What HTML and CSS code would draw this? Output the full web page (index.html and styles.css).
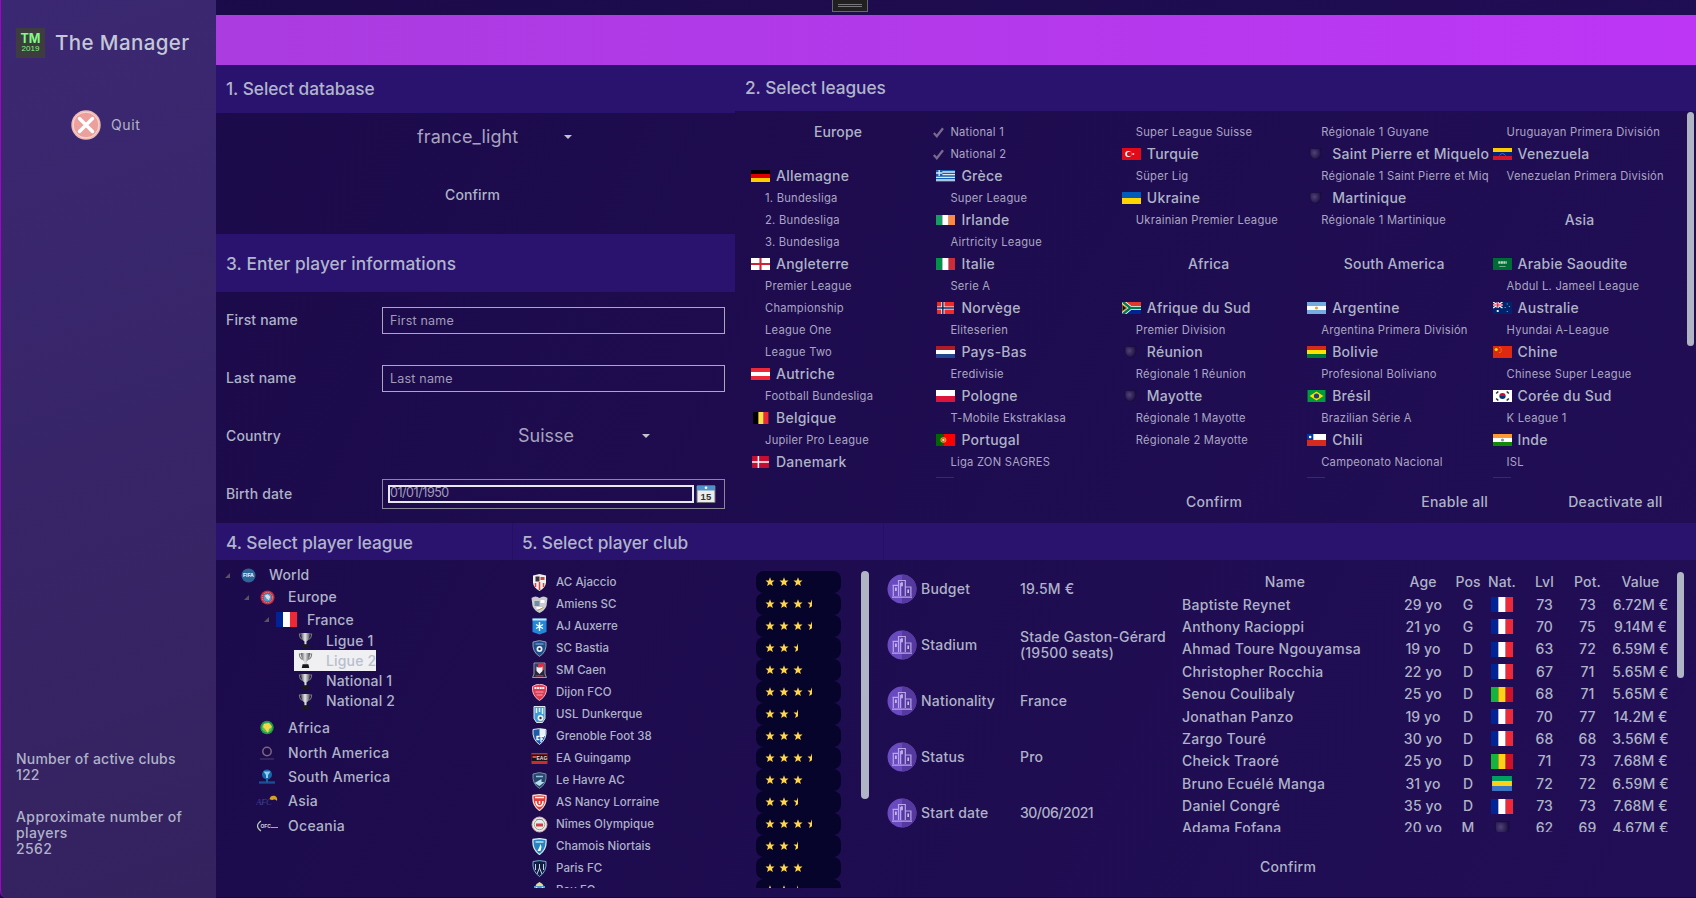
FILE: index.html
```html
<!DOCTYPE html>
<html lang="en">
<head>
<meta charset="utf-8">
<title>The Manager</title>
<link rel="stylesheet" href="styles.css">
</head>
<body>
<svg class="defs" aria-hidden="true">
<defs>
<radialGradient id="dk" cx=".4" cy=".4" r=".6"><stop offset="0" stop-color="#51427c"/><stop offset="1" stop-color="#1c0f40"/></radialGradient>
<linearGradient id="silver"><stop offset="0" stop-color="#55555c"/><stop offset=".45" stop-color="#e8e8ea"/><stop offset="1" stop-color="#4b4b52"/></linearGradient>
</defs>
<symbol id="de" viewBox="0 0 18 12" preserveAspectRatio="none"><path fill="#000" d="M0 0h18v4H0z"/><path fill="#d00" d="M0 4h18v4H0z"/><path fill="#ffce00" d="M0 8h18v4H0z"/></symbol>
<symbol id="en" viewBox="0 0 18 12" preserveAspectRatio="none"><path fill="#fff" d="M0 0h18v12H0z"/><path stroke="#cf2238" stroke-width="2" d="M9 0v12M0 6h18"/></symbol>
<symbol id="at" viewBox="0 0 18 12" preserveAspectRatio="none"><path fill="#ed2939" d="M0 0h18v12H0z"/><path fill="#fff" d="M0 4h18v4H0z"/></symbol>
<symbol id="be" viewBox="0 0 18 12" preserveAspectRatio="none"><path fill="#000" d="M2 0h5v12H2z"/><path fill="#fae042" d="M7 0h5v12H7z"/><path fill="#ed2939" d="M12 0h4.500v12H12z"/></symbol>
<symbol id="dn" viewBox="0 0 18 12" preserveAspectRatio="none"><path fill="#c60c30" d="M1 0h16v12H1z"/><path stroke="#fff" stroke-width="1.400" d="M7 0v12M1 6h16"/></symbol>
<symbol id="gr" viewBox="0 0 18 12" preserveAspectRatio="none"><path fill="#1560ae" d="M0 0h18v12H0z"/><path stroke="#dce8f4" stroke-width="1.300" d="M6 2h12M6 4.700h12M0 7.400h18M0 10h18M3 0v6M0 3h6"/></symbol>
<symbol id="ie" viewBox="0 0 18 12" preserveAspectRatio="none"><path fill="#169b62" d="M0 1h6v10H0z"/><path fill="#fff" d="M6 1h6v10H6z"/><path fill="#ff883e" d="M12 1h6v10h-6z"/></symbol>
<symbol id="it" viewBox="0 0 18 12" preserveAspectRatio="none"><path fill="#009246" d="M0 0h6v12H0z"/><path fill="#fff" d="M6 0h6v12H6z"/><path fill="#ce2b37" d="M12 0h6v12h-6z"/></symbol>
<symbol id="no" viewBox="0 0 18 12" preserveAspectRatio="none"><path fill="#ef2b2d" d="M1 0h16v12H1z"/><path stroke="#fff" stroke-width="3" d="M6.500 0v12M1 6h16"/><path stroke="#002868" stroke-width="1.400" d="M6.500 0v12M1 6h16"/></symbol>
<symbol id="nl" viewBox="0 0 18 12" preserveAspectRatio="none"><path fill="#ae1c28" d="M0 0h18v4H0z"/><path fill="#fff" d="M0 4h18v4H0z"/><path fill="#21468b" d="M0 8h18v4H0z"/></symbol>
<symbol id="pl" viewBox="0 0 18 12" preserveAspectRatio="none"><path fill="#fff" d="M0 0h18v6H0z"/><path fill="#dc143c" d="M0 6h18v6H0z"/></symbol>
<symbol id="pt" viewBox="0 0 18 12" preserveAspectRatio="none"><path fill="#060" d="M0 0h7v12H0z"/><path fill="red" d="M7 0h11v12H7z"/><circle cx="7" cy="6" r="2.800" fill="#e3b01c"/><circle cx="7" cy="6" r="1.600" fill="#e8d8d8" stroke="#d22" stroke-width=".7"/></symbol>
<symbol id="tr" viewBox="0 0 18 12" preserveAspectRatio="none"><path fill="#e30a17" d="M0 0h18v12H0z"/><circle cx="6" cy="6" r="3" fill="#fff"/><circle cx="6.900" cy="6" r="2.300" fill="#e30a17"/><path fill="#fff" d="M9 6l2.500-1v2z"/></symbol>
<symbol id="ua" viewBox="0 0 18 12" preserveAspectRatio="none"><path fill="#005bbb" d="M0 0h18v6H0z"/><path fill="#ffd500" d="M0 6h18v6H0z"/></symbol>
<symbol id="za" viewBox="0 0 18 12" preserveAspectRatio="none"><path fill="#de3831" d="M0 0h18v6H0z"/><path fill="#002395" d="M0 6h18v6H0z"/><path fill="none" stroke="#fff" stroke-width="4" d="M1 0l7 6-7 6M8 6h10"/><path fill="none" stroke="#007a4d" stroke-width="2.400" d="M1 0l7 6-7 6M8 6h10"/><path fill="#111" stroke="#ffb612" stroke-width=".8" d="M0 2.200L4.500 6 0 9.800z"/></symbol>
<symbol id="ve" viewBox="0 0 18 12" preserveAspectRatio="none"><path fill="#fc0" d="M0 0h18v4H0z"/><path fill="#00247d" d="M0 4h18v4H0z"/><path fill="#cf142b" d="M0 8h18v4H0z"/><path fill="none" stroke="#5c76bb" stroke-width=".8" d="M6 7.500q3-4 6 0"/></symbol>
<symbol id="ar" viewBox="0 0 18 12" preserveAspectRatio="none"><path fill="#74acdf" d="M0 0h18v12H0z"/><path fill="#fff" d="M0 4h18v4H0z"/><circle cx="9" cy="6" r="1.500" fill="#e8a33d"/></symbol>
<symbol id="bo" viewBox="0 0 18 12" preserveAspectRatio="none"><path fill="#d52b1e" d="M0 0h18v4H0z"/><path fill="#f9e300" d="M0 4h18v4H0z"/><path fill="#007934" d="M0 8h18v4H0z"/></symbol>
<symbol id="br" viewBox="0 0 18 12" preserveAspectRatio="none"><path fill="#009b3a" d="M.5 0h17v12H.5z"/><path fill="#fedf00" d="M2.500 6L9 1.500 15.500 6 9 10.500z"/><circle cx="9" cy="6" r="2.500" fill="#1b3f86"/></symbol>
<symbol id="cl" viewBox="0 0 18 12" preserveAspectRatio="none"><path fill="#fff" d="M0 0h18v6H0z"/><path fill="#d52b1e" d="M0 6h18v6H0z"/><path fill="#0039a6" d="M0 0h6v6H0z"/><circle cx="3" cy="3" r="1.200" fill="#fff"/></symbol>
<symbol id="sa" viewBox="0 0 18 12" preserveAspectRatio="none"><path fill="#006c35" d="M0 0h18v12H0z"/><path stroke="#b8d8c6" stroke-width="2.400" stroke-dasharray="2 .4" d="M5 4.500h8"/><path stroke="#8cbb9f" stroke-width=".8" d="M6 8.500h6"/></symbol>
<symbol id="au" viewBox="0 0 18 12" preserveAspectRatio="none"><path fill="#00246b" d="M0 0h18v12H0z"/><path stroke="#fff" stroke-width="1.200" d="M0 0l9 6M9 0L0 6"/><path stroke="#fff" stroke-width="2.200" d="M4.500 0v6M0 3h9"/><path stroke="#e4153b" stroke-width="1.100" d="M4.500 0v6M0 3h9"/><circle cx="4.500" cy="9" r="1.100" fill="#fff"/><path fill="#8ba3d0" d="M13 1.500h1v1h-1zM11 5h1v1h-1zM15 4h1v1h-1zM13 9h1v1h-1z"/></symbol>
<symbol id="cn" viewBox="0 0 18 12" preserveAspectRatio="none"><path fill="#de2910" d="M0 0h18v12H0z"/><circle cx="3" cy="3.500" r="1.500" fill="#ffde00"/><path fill="#f3a20a" d="M6 1h1v1H6zM7.200 2.500h1v1h-1zM7.200 4.500h1v1h-1zM6 6h1v1H6z"/></symbol>
<symbol id="kr" viewBox="0 0 18 12" preserveAspectRatio="none"><path fill="#fff" d="M0 0h18v12H0z"/><path fill="#c60c30" d="M6 6a3 3 0 0 1 6 0z"/><path fill="#003478" d="M6 6a3 3 0 0 0 6 0z"/><path stroke="#333" stroke-width="1.500" d="M3 3.500l2-2M13 1.500l2 2M3 8.500l2 2M13 10.500l2-2"/></symbol>
<symbol id="in" viewBox="0 0 18 12" preserveAspectRatio="none"><path fill="#f93" d="M0 0h18v4H0z"/><path fill="#fff" d="M0 4h18v4H0z"/><path fill="#128807" d="M0 8h18v4H0z"/><circle cx="9" cy="6" r="1.500" fill="#8c8cc8"/></symbol>
<symbol id="fr" viewBox="0 0 21 15" preserveAspectRatio="none"><path fill="#002395" d="M0 0h7v15H0z"/><path fill="#fff" d="M7 0h7v15H7z"/><path fill="#ed2939" d="M14 0h7v15h-7z"/></symbol>
<symbol id="ml" viewBox="0 0 21 15" preserveAspectRatio="none"><path fill="#14b53a" d="M0 0h7v15H0z"/><path fill="#fcd116" d="M7 0h7v15H7z"/><path fill="#ce1126" d="M14 0h7v15h-7z"/></symbol>
<symbol id="ga" viewBox="0 0 21 15" preserveAspectRatio="none"><path fill="#009e60" d="M1 0h19v5H1z"/><path fill="#fcd116" d="M1 5h19v5H1z"/><path fill="#3a75c4" d="M1 10h19v5H1z"/></symbol>
<symbol id="xx" viewBox="0 0 18 12"><path fill="url(#dk)" stroke="#180b3a" stroke-width=".6" d="M3.500 0q5.500 1.500 11 0v6q0 4-5.500 6-5.500-2-5.500-6z"/></symbol>
<symbol id="check" viewBox="0 0 11 11"><path fill="none" stroke="#77698f" stroke-width="2.300" d="M.8 6l3 3.200L10 1.200"/></symbol>
<symbol id="star" viewBox="0 0 10 10"><path fill="#ffd54a" d="M5 .3l1.200 3.100 3.300.2L7 5.700l.9 3.300L5 7.200 2.100 9 3 5.700.5 3.600l3.300-.2z"/></symbol>
<symbol id="half" viewBox="0 0 10 10"><path fill="#ffd54a" d="M5 .3v6.900L2.100 9 3 5.700.5 3.600l3.300-.2z"/></symbol>
<symbol id="cup" viewBox="1 1 12 14"><path fill="none" stroke="#77777c" d="M3 2H1.300q0 4 3 5M11 2h1.700q0 4-3 5"/><path fill="url(#silver)" d="M2.800 1h8.400q0 6-3.200 8v3H6V9Q2.800 7 2.800 1z"/><path fill="#19191c" d="M4.300 11.500h5.400l.8 3.500H3.500z"/></symbol>
<symbol id="podium" viewBox="0 0 30 30"><circle cx="15" cy="15" r="14.500" fill="#6a4bbf"/><path fill="#55399f" d="M15 .5a14.500 14.500 0 0 1 0 29z"/><path fill="none" stroke="#b9a6ea" stroke-width="1.200" d="M5 23.200h20M6.300 22V11.300h5.200V22M11.500 22V6.500h6.800V22M18.300 22v-9h5.600v9M13.500 22V9M5.500 11.300h6M11.500 6.500h7M18.300 13h6"/><path stroke="#d6cbf5" stroke-width="1.500" d="M15 8.300v4M8.900 13.500v3.500M21.200 15.500v3.500"/></symbol>
<symbol id="tri" viewBox="0 0 6 6"><path fill="#5a555a" d="M6 0v6H0z"/></symbol>
</svg>

<aside class="sidebar">
  <div class="brand">
    <div class="logo"><b>TM</b><span>2019</span></div>
    <h1>The Manager</h1>
  </div>
  <div class="quit">
    <svg viewBox="0 0 30 30"><circle cx="15" cy="15" r="14.700" fill="#f0b9b4"/><circle cx="15" cy="15" r="12.800" fill="#eca09d" stroke="#fbe3dc" stroke-width=".8"/><path stroke="#fff" stroke-width="3.400" stroke-linecap="round" d="M8.500 8.500l13 13M21.500 8.500l-13 13"/></svg>
    <span>Quit</span>
  </div>
  <div class="stats">
    <p>Number of active clubs<br>122</p>
    <p class="wider">Approximate number of players<br>2562</p>
  </div>
</aside>

<main class="main">
  <div class="topbar"><div class="grip"><i></i></div></div>
  <div class="banner"></div>

  <div class="upper">
    <section class="left">
      <h2 class="h48">1. Select database</h2>
      <div class="database">
        <div class="combo db">france_light<i class="caret"></i></div>
        <div class="btn">Confirm</div>
      </div>
      <h2 class="h58">3. Enter player informations</h2>
      <div class="form">
        <label>First name</label><div class="input">First name</div>
        <label>Last name</label><div class="input">Last name</div>
        <label>Country</label><div class="combo country">Suisse<i class="caret"></i></div>
        <label>Birth date</label>
        <div class="date"><div class="date-text">01/01/1950</div>
          <svg viewBox="0 0 20 18"><path fill="#ececec" stroke="#707078" d="M1 1h18v16.500H1z"/><path fill="#4f92cb" d="M1 .5h18v5H1z"/><circle cx="10" cy="2.800" r="1.300" fill="#fff"/><text x="10" y="15.300" text-anchor="middle" class="cal">15</text></svg>
        </div>
      </div>
    </section>

    <section class="leagues">
      <h2 class="h46">2. Select leagues</h2>
      <div class="league-wrap">
      <div class="league-grid">
        <h3>Europe</h3><i></i>
        <b><svg><use href="#de"/></svg>Allemagne</b><p>1. Bundesliga</p><p>2. Bundesliga</p><p>3. Bundesliga</p>
        <b><svg><use href="#en"/></svg>Angleterre</b><p>Premier League</p><p>Championship</p><p>League One</p><p>League Two</p>
        <b><svg><use href="#at"/></svg>Autriche</b><p>Football Bundesliga</p>
        <b><svg><use href="#be"/></svg>Belgique</b><p>Jupiler Pro League</p>
        <b><svg><use href="#dn"/></svg>Danemark</b><i></i>

        <p class="on"><svg><use href="#check"/></svg>National 1</p><p class="on"><svg><use href="#check"/></svg>National 2</p>
        <b><svg><use href="#gr"/></svg>Grèce</b><p>Super League</p>
        <b><svg><use href="#ie"/></svg>Irlande</b><p>Airtricity League</p>
        <b><svg><use href="#it"/></svg>Italie</b><p>Serie A</p>
        <b><svg><use href="#no"/></svg>Norvège</b><p>Eliteserien</p>
        <b><svg><use href="#nl"/></svg>Pays-Bas</b><p>Eredivisie</p>
        <b><svg><use href="#pl"/></svg>Pologne</b><p>T-Mobile Ekstraklasa</p>
        <b><svg><use href="#pt"/></svg>Portugal</b><p>Liga ZON SAGRES</p><i class="edge"></i>

        <p>Super League Suisse</p>
        <b><svg><use href="#tr"/></svg>Turquie</b><p>Süper Lig</p>
        <b><svg><use href="#ua"/></svg>Ukraine</b><p>Ukrainian Premier League</p><i></i>
        <h3>Africa</h3><i></i>
        <b><svg><use href="#za"/></svg>Afrique du Sud</b><p>Premier Division</p>
        <b><svg class="dim"><use href="#xx"/></svg>Réunion</b><p>Régionale 1 Réunion</p>
        <b><svg class="dim"><use href="#xx"/></svg>Mayotte</b><p>Régionale 1 Mayotte</p><p>Régionale 2 Mayotte</p><i></i><i></i>

        <p>Régionale 1 Guyane</p>
        <b><svg class="dim"><use href="#xx"/></svg>Saint Pierre et Miquelo</b><p>Régionale 1 Saint Pierre et Miq</p>
        <b><svg class="dim"><use href="#xx"/></svg>Martinique</b><p>Régionale 1 Martinique</p><i></i>
        <h3>South America</h3><i></i>
        <b><svg><use href="#ar"/></svg>Argentine</b><p>Argentina Primera División</p>
        <b><svg><use href="#bo"/></svg>Bolivie</b><p>Profesional Boliviano</p>
        <b><svg><use href="#br"/></svg>Brésil</b><p>Brazilian Série A</p>
        <b><svg><use href="#cl"/></svg>Chili</b><p>Campeonato Nacional</p><i class="edge"></i>

        <p>Uruguayan Primera División</p>
        <b><svg><use href="#ve"/></svg>Venezuela</b><p>Venezuelan Primera División</p><i></i>
        <h3>Asia</h3><i></i>
        <b><svg><use href="#sa"/></svg>Arabie Saoudite</b><p>Abdul L. Jameel League</p>
        <b><svg><use href="#au"/></svg>Australie</b><p>Hyundai A-League</p>
        <b><svg><use href="#cn"/></svg>Chine</b><p>Chinese Super League</p>
        <b><svg><use href="#kr"/></svg>Corée du Sud</b><p>K League 1</p>
        <b><svg><use href="#in"/></svg>Inde</b><p>ISL</p><i class="edge"></i>
      </div>
      <div class="scroll"></div>
      </div>
      <div class="actions"><span>Confirm</span><span>Enable all</span><span>Deactivate all</span></div>
    </section>
  </div>

  <div class="lower">
    <section>
      <h2 class="h37">4. Select player league</h2>
      <div class="tree">
        <div class="t0"><svg class="tri"><use href="#tri"/></svg><svg class="ic" viewBox="0 0 16 16"><circle cx="8" cy="8" r="7.500" fill="#2d6597"/><text x="8" y="10" text-anchor="middle" class="fifa">FIFA</text></svg>World</div>
        <div class="t1"><svg class="tri"><use href="#tri"/></svg><svg class="ic" viewBox="0 0 16 16"><circle cx="8" cy="8" r="7.500" fill="#c62e3e"/><circle cx="8" cy="8" r="5.500" fill="none" stroke="#ef9aa0" stroke-dasharray="1.300 1"/><circle cx="8" cy="8" r="4.300" fill="#3fa0d8"/><path fill="#e4d9dd" d="M5 6l3-1.500L11 7 9.500 11 7 9z"/></svg>Europe</div>
        <div class="t2"><svg class="tri"><use href="#tri"/></svg><svg class="fl"><use href="#fr"/></svg>France</div>
        <div class="t3"><svg class="ic"><use href="#cup"/></svg>Ligue 1</div>
        <div class="t3 sel"><svg class="ic"><use href="#cup"/></svg>Ligue 2</div>
        <div class="t3"><svg class="ic"><use href="#cup"/></svg>National 1</div>
        <div class="t3 last"><svg class="ic"><use href="#cup"/></svg>National 2</div>
        <div class="c"><svg class="ic" viewBox="0 0 16 16"><circle cx="8" cy="7.500" r="6.700" fill="#1f9a4a"/><circle cx="8" cy="7.500" r="5" fill="#5fc14f"/><path fill="#f2d64b" d="M5 4l5-1 3 4-3 2-1 4-3-4-2-2z"/></svg>Africa</div>
        <div class="c"><svg class="ic" viewBox="0 0 16 16"><circle cx="8" cy="6.500" r="4.200" fill="none" stroke="#7d6777" stroke-width="1.500"/><path stroke="#33255f" stroke-width="2" d="M1 14h14"/></svg>North America</div>
        <div class="c"><svg class="ic" viewBox="0 0 16 16"><circle cx="8" cy="5.500" r="5" fill="#1766a9"/><path fill="#8fcdf0" d="M4.500 2.500h7L9 6v3H7V6z"/><path stroke="#174e94" stroke-width="2.400" d="M0 13.500h16"/><path stroke="#1766a9" stroke-width="2" d="M8 9v4"/></svg>South America</div>
        <div class="c"><svg class="ic wide" viewBox="0 0 22 12"><text x="0" y="9.500" class="afc">AFC</text><path fill="#d8a020" d="M13.500 4q1-4 5-3.200Q22 2 21 6q-1-2-3-1.500-2 1-4.500-.5z"/></svg>Asia</div>
        <div class="c"><svg class="ic wide" viewBox="0 0 22 12"><path fill="none" stroke="#b9c9b4" stroke-width="1.200" d="M5 1Q-2 6 5 11"/><text x="4.500" y="8" class="ofc">OFC</text><path stroke="#aaa6bf" d="M15 7.500h7"/></svg>Oceania</div>
      </div>
    </section>

    <section>
      <h2 class="h37 cut">5. Select player club</h2>
      <div class="clubs">
        <div class="club-list">
          <div><svg class="cr" viewBox="0 0 16 17"><path fill="#f2eeee" d="M1.500 1.500L8 0l6.500 1.500v7Q14 14 8 17 2 14 1.500 8.500z"/><path stroke="#d2433f" stroke-width="1.500" d="M4 9v4M8 8v8M12 9v4"/><path fill="#37323a" d="M4 2.500h4v5H4z"/><path fill="#c94444" d="M9 3h4v3H9z"/></svg>AC Ajaccio<span class="pill"><svg><use href="#star"/></svg><svg><use href="#star"/></svg><svg><use href="#star"/></svg></span></div>
          <div><svg class="cr" viewBox="0 0 16 17"><path fill="#c9cbd0" d="M0 2q4-3 8 0 4-3 8 0l-1 8q-2 5-7 7-5-2-7-7z"/><path fill="#6e8ea8" d="M3 5h5v5H3z"/><path fill="#fff" d="M9 4h4v3H9zM5 11h6v2H5z"/><path stroke="#b09b50" d="M6 14.500l6-3"/></svg>Amiens SC<span class="pill"><svg><use href="#star"/></svg><svg><use href="#star"/></svg><svg><use href="#star"/></svg><svg><use href="#half"/></svg></span></div>
          <div><svg class="cr" viewBox="0 0 16 17"><path fill="#2089dc" d="M1 .5h14V14l-7 2.500L1 14z"/><path fill="#cce5f7" d="M1 .5h14v2H1z"/><path stroke="#fff" stroke-width="1.400" d="M8 4v9M4.500 6.500l7 4M11.500 6.500l-7 4"/></svg>AJ Auxerre<span class="pill"><svg><use href="#star"/></svg><svg><use href="#star"/></svg><svg><use href="#star"/></svg><svg><use href="#half"/></svg></span></div>
          <div><svg class="cr" viewBox="0 0 16 17"><path fill="#1d4f8d" stroke="#8d9db3" d="M1.500 2L8 .6 14.500 2q1 10-6.500 14.400Q.5 12 1.500 2z"/><path stroke="#94b4d8" d="M4 4h8"/><circle cx="8" cy="9" r="3" fill="#e9eef4"/><circle cx="8" cy="9" r="1.200" fill="#224"/></svg>SC Bastia<span class="pill"><svg><use href="#star"/></svg><svg><use href="#star"/></svg><svg><use href="#half"/></svg></span></div>
          <div><svg class="cr" viewBox="0 0 16 17"><path fill="#26273f" stroke="#9d9aa5" d="M2.500 1h11v11l1.500 3.500H1L2.500 12z"/><path fill="#d23445" d="M3.500 2h9v6h-9z"/><path fill="#2b3f74" d="M3.500 2h3v6h-3z"/><path fill="#f1eff1" d="M5 4.500l1.500 1h3l1.500-1V9l-3 3-3-3z"/><path fill="#b32838" d="M4 13h8v1.500H4z"/></svg>SM Caen<span class="pill"><svg><use href="#star"/></svg><svg><use href="#star"/></svg><svg><use href="#star"/></svg></span></div>
          <div><svg class="cr" viewBox="0 0 16 17"><path fill="#e23b54" stroke="#f0b8c0" d="M1 2.500Q8-2 15 2.500q1 9-7 14Q0 11.500 1 2.500z"/><path stroke="#fff" stroke-width="2" stroke-dasharray="2 .6" d="M3 4h10"/><path stroke="#f5a7b2" d="M4 8h8M5 11h6"/></svg>Dijon FCO<span class="pill"><svg><use href="#star"/></svg><svg><use href="#star"/></svg><svg><use href="#star"/></svg><svg><use href="#half"/></svg></span></div>
          <div><svg class="cr" viewBox="0 0 16 17"><path fill="#409bd6" stroke="#dbe8f0" d="M2.500.5h11v12L11 16.500H5L2.500 12.500z"/><path stroke="#e4f1fa" stroke-width="1.500" d="M5 2v5M8 2v4M11 2v6"/><circle cx="9" cy="12" r="3" fill="#eee"/><circle cx="9" cy="12" r="1.200" fill="#333"/></svg>USL Dunkerque<span class="pill"><svg><use href="#star"/></svg><svg><use href="#star"/></svg><svg><use href="#half"/></svg></span></div>
          <div><svg class="cr" viewBox="0 0 16 17"><path fill="#1c5ba7" stroke="#dce6f0" d="M1.500 1.500L8 .6l6.500.9q1 10-6.500 15Q.5 11.500 1.500 1.500z"/><path fill="#e8f0f8" d="M8 1h6v7l-6 1z"/><path fill="none" stroke="#fff" stroke-width="1.300" d="M8 8.500H5.500v3H8M9.500 14V8.500h3M9.500 11h2"/></svg>Grenoble Foot 38<span class="pill"><svg><use href="#star"/></svg><svg><use href="#star"/></svg><svg><use href="#star"/></svg></span></div>
          <div><svg class="cr" viewBox="0 0 16 17"><path fill="#c82d2d" d="M0 3h16v11H0z"/><path fill="#1b1416" d="M0 4.500h16V11H0z"/><path stroke="#e84640" stroke-width="2" d="M1 7h4"/><text x="5" y="10" class="eag">EAG</text></svg>EA Guingamp<span class="pill"><svg><use href="#star"/></svg><svg><use href="#star"/></svg><svg><use href="#star"/></svg><svg><use href="#half"/></svg></span></div>
          <div><svg class="cr" viewBox="0 0 16 17"><path fill="#26486f" stroke="#7890a7" d="M1.500 2L8 .6 14.500 2q1 10-6.500 14.400Q.5 12 1.500 2z"/><path stroke="#9cc1dc" stroke-width="1.500" d="M4.500 4.500h7"/><path fill="#b7dced" d="M3 11l7-4v3h3l-5 4z"/></svg>Le Havre AC<span class="pill"><svg><use href="#star"/></svg><svg><use href="#star"/></svg><svg><use href="#star"/></svg></span></div>
          <div><svg class="cr" viewBox="0 0 16 17"><path fill="#e23e37" stroke="#f3d9d4" stroke-width="1.300" d="M1.500 1.500L8 .6l6.500.9q1 10-6.500 15Q.5 11.500 1.500 1.500z"/><path fill="none" stroke="#fff" stroke-width="1.500" d="M3.500 3.500h9M4.500 7q0 5 3.500 5t3.500-5M8 7v3"/></svg>AS Nancy Lorraine<span class="pill"><svg><use href="#star"/></svg><svg><use href="#star"/></svg><svg><use href="#half"/></svg></span></div>
          <div><svg class="cr" viewBox="0 0 16 17"><circle cx="8" cy="8.500" r="7.500" fill="#eceaea" stroke="#dca5a5"/><circle cx="8" cy="8.500" r="5.200" fill="none" stroke="#79a785" stroke-width=".9"/><path fill="#d33b45" d="M4.500 7.500h7v3h-7z"/><path stroke="#cf6a70" d="M5 3.500h6"/></svg>Nîmes Olympique<span class="pill"><svg><use href="#star"/></svg><svg><use href="#star"/></svg><svg><use href="#star"/></svg><svg><use href="#half"/></svg></span></div>
          <div><svg class="cr" viewBox="0 0 16 17"><path fill="#2585c0" stroke="#d4e8f2" stroke-width="1.300" d="M1.500 1.500L8 .6l6.500.9q1 10-6.500 15Q.5 11.500 1.500 1.500z"/><path stroke="#bfe0f1" stroke-width="1.500" d="M4 4h8"/><path fill="#fff" d="M9 6l1 3-1 4H6l2-4z"/></svg>Chamois Niortais<span class="pill"><svg><use href="#star"/></svg><svg><use href="#star"/></svg><svg><use href="#half"/></svg></span></div>
          <div><svg class="cr" viewBox="0 0 16 17"><path fill="#131d44" stroke="#74add8" d="M1.500 1.500L8 .6l6.500.9q1 10-6.500 15Q.5 11.500 1.500 1.500z"/><path fill="none" stroke="#c8d6e4" d="M8 4v4l-2.500 6M8 8l2.500 6M4 4v6M12 4v6"/></svg>Paris FC<span class="pill"><svg><use href="#star"/></svg><svg><use href="#star"/></svg><svg><use href="#star"/></svg></span></div>
          <div><svg class="cr" viewBox="0 0 16 17"><path fill="#e6dd91" d="M4 4l1-2 3-2 3 2 1 2z"/><path fill="#4e9bd1" d="M2.500 4h11v12h-11z"/><path stroke="#e9f2f7" stroke-width="1.400" d="M5 5v10M11 5v10"/></svg>Pau FC<span class="pill"><svg><use href="#star"/></svg><svg><use href="#star"/></svg><svg><use href="#half"/></svg></span></div>
        </div>
        <div class="scroll"></div>
      </div>
    </section>

    <section>
      <h2 class="h37 cut"></h2>
      <div class="detail">
        <div class="info">
          <svg><use href="#podium"/></svg><span>Budget</span><span>19.5M €</span>
          <svg><use href="#podium"/></svg><span>Stadium</span><span>Stade Gaston-Gérard (19500 seats)</span>
          <svg><use href="#podium"/></svg><span>Nationality</span><span>France</span>
          <svg><use href="#podium"/></svg><span>Status</span><span>Pro</span>
          <svg><use href="#podium"/></svg><span>Start date</span><span class="tight">30/06/2021</span>
        </div>
        <div class="squad">
          <div class="row head"><span>Name</span><span>Age</span><span>Pos</span><span>Nat.</span><span>Lvl</span><span>Pot.</span><span>Value</span></div>
          <div class="row"><span>Baptiste Reynet</span><span>29 yo</span><span>G</span><svg><use href="#fr"/></svg><span>73</span><span>73</span><span>6.72M €</span></div>
          <div class="row"><span>Anthony Racioppi</span><span>21 yo</span><span>G</span><svg><use href="#fr"/></svg><span>70</span><span>75</span><span>9.14M €</span></div>
          <div class="row"><span>Ahmad Toure Ngouyamsa</span><span>19 yo</span><span>D</span><svg><use href="#fr"/></svg><span>63</span><span>72</span><span>6.59M €</span></div>
          <div class="row"><span>Christopher Rocchia</span><span>22 yo</span><span>D</span><svg><use href="#fr"/></svg><span>67</span><span>71</span><span>5.65M €</span></div>
          <div class="row"><span>Senou Coulibaly</span><span>25 yo</span><span>D</span><svg><use href="#ml"/></svg><span>68</span><span>71</span><span>5.65M €</span></div>
          <div class="row"><span>Jonathan Panzo</span><span>19 yo</span><span>D</span><svg><use href="#fr"/></svg><span>70</span><span>77</span><span>14.2M €</span></div>
          <div class="row"><span>Zargo Touré</span><span>30 yo</span><span>D</span><svg><use href="#fr"/></svg><span>68</span><span>68</span><span>3.56M €</span></div>
          <div class="row"><span>Cheick Traoré</span><span>25 yo</span><span>D</span><svg><use href="#ml"/></svg><span>71</span><span>73</span><span>7.68M €</span></div>
          <div class="row"><span>Bruno Ecuélé Manga</span><span>31 yo</span><span>D</span><svg><use href="#ga"/></svg><span>72</span><span>72</span><span>6.59M €</span></div>
          <div class="row"><span>Daniel Congré</span><span>35 yo</span><span>D</span><svg><use href="#fr"/></svg><span>73</span><span>73</span><span>7.68M €</span></div>
          <div class="row"><span>Adama Fofana</span><span>20 yo</span><span>M</span><svg><use href="#xx"/></svg><span>62</span><span>69</span><span>4.67M €</span></div>
        </div>
        <div class="scroll"></div>
      </div>
      <div class="final">Confirm</div>
    </section>
  </div>
</main>
</body>
</html>
```
FILE: styles.css
```css
* { box-sizing: border-box; margin: 0; padding: 0; }
body {
  width: 1696px; height: 898px; overflow: hidden; display: flex;
  background: linear-gradient(115deg, #1b0a49, #210e56);
  color: #aeb3c7;
  font: 500 14px/16px Inter, "Open Sans", sans-serif;
  letter-spacing: .15px;
}
.defs { position: absolute; width: 0; height: 0; }
svg { flex: none; display: block; }
i, b { font-style: normal; font-weight: 500; }

.sidebar {
  width: 216px; height: 898px; flex: none; display: flex; flex-direction: column;
  background: linear-gradient(160deg, #3b2872, #34225f);
  border-left: 1px solid #a800cc; border-bottom-left-radius: 7px;
}
.brand { display: flex; align-items: center; gap: 10px; padding: 27px 0 0 15px; height: 58px; }
.logo { width: 29px; height: 30px; background: #3d3d40; color: #82fb82; text-align: center; display: flex; flex-direction: column; padding-top: 4px; letter-spacing: 0; }
.logo b { font: 700 12.5px/13px Inter, sans-serif; }
.logo span { font: 400 8px/8px "Liberation Sans", sans-serif; }
.brand h1 { font-size: 20.5px; font-weight: 500; line-height: 30px; color: #c3c8d8; letter-spacing: .4px; }
.quit { display: flex; align-items: center; gap: 10px; padding: 52px 0 0 70px; color: #b3b3c8; font-weight: 400; letter-spacing: .6px; }
.quit svg { width: 30px; height: 30px; }
.stats { margin-top: auto; padding: 0 20px 41px 15px; color: #afb3c8; }
.stats p + p { margin-top: 26px; }
.stats p { letter-spacing: .2px; }
.stats .wider { letter-spacing: .4px; }

.main { width: 1480px; flex: none; }
.topbar { height: 15px; }
.grip { width: 36px; height: 12px; margin-left: 616px; background: #202020; border: 1px solid #68686c; border-top: 0; padding: 4px 5px; }
.grip i { display: block; height: 3px; border: 1px solid #77777c; border-width: 1px 0; }
.banner { height: 50px; background: linear-gradient(90deg, #aa3ce0, #bd36f6); }
h2 { background: #2a126f; font-size: 17.300px; font-weight: 500; padding-left: 10px; color: #b0b5cb; letter-spacing: -.05px; }
.h48 { height: 48px; line-height: 48px; }
.h58 { height: 58px; line-height: 60px; letter-spacing: .1px; }
.h46 { height: 46px; line-height: 46px; }
.h37 { height: 37px; line-height: 39px; }
.cut { border-left: 1px solid #240f61; padding-left: 9px; }

.upper { display: grid; grid-template-columns: 519px 961px; height: 458px; }
.database { height: 121px; display: flex; flex-direction: column; padding-top: 13px; }
.combo { display: flex; align-items: center; font-size: 18px; line-height: 22px; font-weight: 400; color: #a8a3bf; }
.combo.db { padding-left: 201px; gap: 46px; letter-spacing: .1px; }
.combo.country { padding-left: 136px; gap: 68px; letter-spacing: 0; }
.caret { width: 8px; border: 4px solid transparent; border-top-color: #c3c3d0; border-bottom: 0; }
.btn { padding: 39px 0 0 229px; }
.form { display: grid; grid-template-columns: 156px 343px; grid-auto-rows: 58px; align-items: center; padding-left: 10px; height: 231px; margin-top: -1px; }
.input { height: 27px; border: 1px solid #aaa9b8; padding-left: 7px; line-height: 25px; font-size: 12.5px; font-weight: 400; color: #a19cb9; letter-spacing: .2px; }
.date { height: 30px; border: 1px solid #8a8798; padding: 0 8px 0 5px; display: flex; align-items: center; justify-content: space-between; }
.date-text { width: 306px; height: 18px; border: 2px solid #e8e8f0; padding-left: 0; line-height: 12px; font-size: 12.5px; font-weight: 400; color: #a29dbb; letter-spacing: -.45px; }
.date svg { width: 20px; height: 18px; }
.cal { font: 700 9.5px "Liberation Sans", sans-serif; fill: #333; }

.league-wrap { display: flex; justify-content: space-between; height: 367px; padding: 0 2px 0 10px; }
.league-grid { display: grid; grid-auto-flow: column; grid-template-rows: repeat(17, 22px); grid-template-columns: repeat(5, 185.4px); height: 357px; margin-top: 10px; overflow: hidden; }
.league-grid > * { display: flex; align-items: center; white-space: nowrap; width: 185px; }
.league-grid h3 { font-size: 14px; font-weight: 500; justify-content: center; width: 186px; }
.league-grid b { padding-left: 6px; gap: 6px; letter-spacing: .25px; }
.league-grid b svg { width: 19px; height: 12px; }
.league-grid b svg.dim { margin-left: -1px; margin-right: 1px; }
.league-grid p { padding-left: 20px; font-size: 11.200px; font-weight: 400; color: #aaa6c0; letter-spacing: .25px; }
.league-grid p.on { padding-left: 3px; gap: 6px; }
.on svg { width: 11px; height: 11px; }
.league-grid .edge { border-top: 1px solid #3a2a62; width: 18px; margin: 4px 0 0 6px; }
.scroll { width: 8px; border-radius: 4px; background: #afb5c4; flex: none; }
.league-wrap .scroll { height: 234px; margin-top: 1px; width: 7px; }
.actions { display: flex; padding: 16px 0 0 451px; letter-spacing: .3px; }
.actions span:nth-child(2) { margin-left: 179px; }
.actions span:nth-child(3) { margin-left: 80px; }
.actions span { white-space: nowrap; }

.lower { display: grid; grid-template-columns: 296px 371px 813px; height: 375px; border-bottom: 1px solid #150840; }
.tree { padding: 4px 0 0 9px; }
.tree > div { display: flex; align-items: center; height: 22px; width: max-content; }
.tri { width: 5px; height: 5px; margin-right: 11px; }
.ic { width: 15px; height: 15px; }
.tree .t0 .ic, .tree .t1 .ic { margin-right: 13px; }
.tree .t1 { padding-left: 19px; letter-spacing: .3px; }
.tree .t2 { padding-left: 39px; height: 23px; }
.t2 .tri { margin-right: 7px; }
.fl { width: 21px; height: 15px; margin-right: 10px; }
.tree .t3 { margin-left: 69px; padding-left: 4px; height: 20px; }
.tree .t3:nth-child(4) { height: 19px; }
.tree .t3 .ic { margin-right: 13px; }
.tree .sel { height: 21px; background: #f0f0f2; color: #b8bed0; }
.tree .last { margin-bottom: 5px; }
.tree .c { padding-left: 34px; height: 24.400px; letter-spacing: .3px; }
.tree .c .ic { width: 16px; height: 16px; margin: 0 13px 0 0; }
.tree .c .wide { width: 22px; height: 12px; margin: 0 10px 0 -3px; }
.fifa { font: 700 5.500px Inter, sans-serif; fill: #e6f0fa; letter-spacing: 0; }
.afc { font: italic 9px "Liberation Serif", serif; fill: #3d3f91; letter-spacing: -.5px; }
.ofc { font: 700 5px Inter, sans-serif; fill: #d4d0e0; letter-spacing: 0; }
.eag { font: 700 5px "Liberation Sans", sans-serif; fill: #f4dcdc; letter-spacing: 0; }

.clubs { display: flex; justify-content: space-between; height: 328px; padding: 11px 14px 0 18px; overflow: hidden; }
.club-list > div { display: flex; align-items: center; width: 310.500px; height: 22px; font-size: 11.5px; letter-spacing: .05px; }
.cr { width: 17px; height: 17px; margin: 0 8px 0 1px; }
.pill { width: 85px; height: 21.400px; margin-left: auto; border-radius: 8px; background: #06042a; display: flex; align-items: center; gap: 4.300px; padding-left: 9px; }
.pill svg { width: 10px; height: 10px; }
.clubs .scroll { height: 228px; }

.detail { display: flex; height: 272px; padding-left: 4px; overflow: hidden; }
.info { width: 295px; display: grid; grid-template-columns: 34px 99px 150px; grid-auto-rows: 56.100px; align-items: center; height: 272px; padding-top: 1px; letter-spacing: .2px; }
.info svg { width: 30px; height: 30px; }
.tight { letter-spacing: -.5px; }
.squad { width: 493px; padding-top: 11px; letter-spacing: .1px; }
.row { display: grid; grid-template-columns: 206px 70px 20px 48px 37px 49px 57px; height: 22.400px; align-items: center; justify-items: center; white-space: nowrap; }
.row span:first-child { justify-self: start; letter-spacing: .28px; }
.row.head span:first-child { justify-self: center; }
.row svg { width: 22px; height: 15px; }
.detail .scroll { height: 106px; margin: 12px 1px 0 2px; width: 7px; }
.final { padding: 27px 0 0 377px; letter-spacing: .3px; }
```
